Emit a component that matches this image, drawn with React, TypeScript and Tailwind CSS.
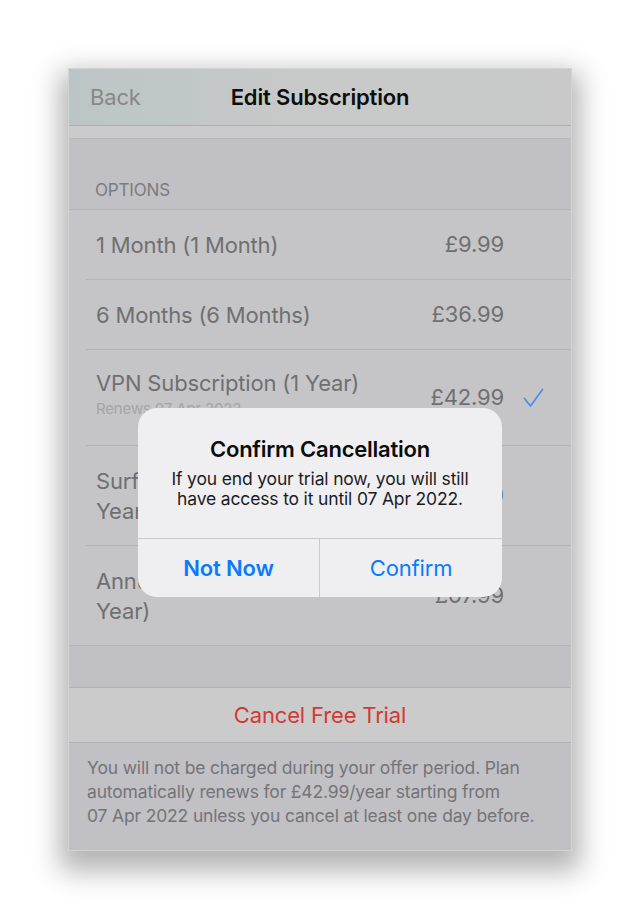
import { Fragment } from 'react'

const plans = [
  { id: 'p1', name: '1 Month (1 Month)', price: '£9.99', h: 'h-[69px]' },
  { id: 'p2', name: '6 Months (6 Months)', price: '£36.99', h: 'h-[69px]' },
  { id: 'p3', name: 'VPN Subscription (1 Year)', sub: 'Renews 07 Apr 2022', price: '£42.99', h: 'h-[95px]', active: true },
  { id: 'p4', name: 'Surfshark One Antivirus (1\nYear)', price: '£59.99', h: 'h-[99px]' },
  { id: 'p5', name: 'Annual Subscription Plus (1\nYear)', price: '£67.99', h: 'h-[99px]', last: true },
]

function Check() {
  return (
    <svg width="21" height="20" viewBox="0 0 21 20" fill="none">
      <path d="M1.5 10.5 L7.5 18 L19.5 1.5" stroke="#4a93e6" strokeWidth="1.8" strokeLinecap="round" strokeLinejoin="round" />
    </svg>
  )
}

function PlanRow({ plan }: { plan: (typeof plans)[number] }) {
  return (
    <div className={`ml-[17px] ${plan.last ? '' : 'border-b border-[#b4b4b7]'}`}>
      <div className={`flex items-center pl-[10px] pr-[27px] ${plan.h}`}>
        <div className={`flex-1 min-w-0 ${plan.sub ? 'pb-[5px]' : ''}`}>
          <div className={`whitespace-pre-line text-[22px] text-[#6f6f71] ${plan.sub ? 'leading-[28px]' : 'leading-[30px]'}`}>
            {plan.name}
          </div>
          {plan.sub && <div className="text-[15px] leading-[24px] text-[#a4a4a6]">{plan.sub}</div>}
        </div>
        <span className="text-[22px] text-[#6f6f71]">{plan.price}</span>
        <div className="flex w-[40px] justify-end">{plan.active && <Check />}</div>
      </div>
    </div>
  )
}

function Alert() {
  return (
    <div className="absolute left-[69px] top-[339px] w-[364px] overflow-hidden rounded-[19px] bg-[#efeff1]">
      <div className="px-[16px] pb-[29px] pt-[27px] text-center">
        <div className="text-[22px] font-semibold leading-[28px] tracking-[-0.01em] text-[#0c0c0c]">Confirm Cancellation</div>
        <div className="mt-[6px] text-[17.5px] leading-[20px] text-[#1c1c1e]">
          If you end your trial now, you will still
          <br />
          have access to it until 07 Apr 2022.
        </div>
      </div>
      <div className="grid h-[59px] grid-cols-2 border-t border-[#c9c9cd]">
        <button className="flex items-center justify-center border-r border-[#c9c9cd] text-[22px] font-semibold text-[#0a7aff]">
          Not Now
        </button>
        <button className="flex items-center justify-center text-[22px] text-[#0a7aff]">Confirm</button>
      </div>
    </div>
  )
}

export default function App() {
  return (
    <div className="min-h-[919px] bg-white pl-[68px] pt-[68px] font-['Inter','Liberation_Sans',sans-serif] tracking-[-0.01em]">
      <div className="relative flex h-[783px] w-[504px] flex-col overflow-hidden border border-[#d3d3d3] bg-[#c1c0c5] shadow-[0_12px_26px_8px_rgba(0,0,0,0.3)]">
        {/* nav */}
        <div className="relative flex h-[57px] shrink-0 items-center justify-center border-b border-[#aeaeae] bg-[linear-gradient(90deg,#bcc5c6_0%,#c0c7c7_20%,#c8c9c9_45%,#c9c9c9_100%)]">
          <span className="absolute left-[21px] text-[22px] text-[#878787]">Back</span>
          <span className="text-[22px] font-semibold text-[#0e0e0e]">Edit Subscription</span>
        </div>
        <div className="h-[13px] shrink-0 border-b border-[#b9b9b9] bg-[#cbcbcb]" />

        {/* options */}
        <div className="flex h-[70px] shrink-0 items-end pb-[9px] pl-[26px] text-[17px] leading-[20px] text-[#7c7c80]">OPTIONS</div>
        <div className="shrink-0 border-y border-[#b4b4b7] bg-[#c5c5c7]">
          {plans.map(p => (
            <Fragment key={p.id}>
              <PlanRow plan={p} />
            </Fragment>
          ))}
        </div>

        <div className="h-[41px] shrink-0" />

        <div className="flex h-[56px] shrink-0 items-center justify-center border-y border-[#b3b3b3] bg-[#cbcbcb] text-[22px] text-[#d13a35]">
          Cancel Free Trial
        </div>

        <div className="whitespace-nowrap px-[18px] pt-[13px] text-[17.5px] leading-[24px] text-[#747478]">
          You will not be charged during your offer period. Plan
          <br />
          automatically renews for £42.99/year starting from
          <br />
          07 Apr 2022 unless you cancel at least one day before.
        </div>

        <Alert />
      </div>
    </div>
  )
}
